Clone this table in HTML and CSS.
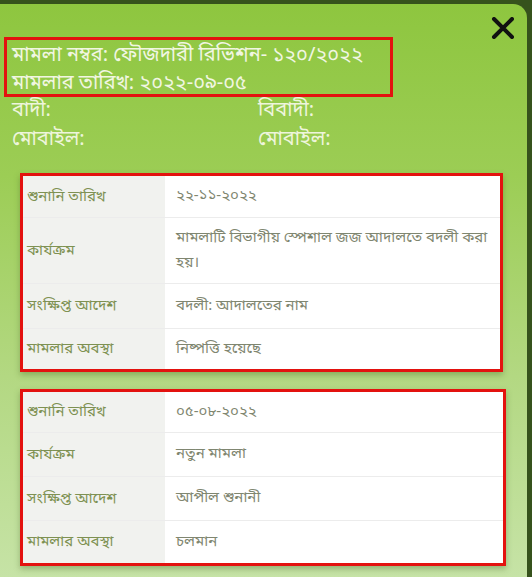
FILE: index.html
```html
<!DOCTYPE html>
<html lang="bn">
<head>
<meta charset="utf-8">
<link rel="stylesheet" href="styles.css">
</head>
<body>
<div class="modal">
  <div class="close-row">
    <svg class="close" width="24" height="22" viewBox="0 0 24 22" aria-label="close">
      <path d="M3 2 L21 20 M21 2 L3 20" stroke="#111" stroke-width="4" stroke-linecap="round" fill="none"/>
    </svg>
  </div>
  <div class="case-box">
    <div class="line">মামলা নম্বর: ফৌজদারী রিভিশন- ১২০/২০২২</div>
    <div class="line">মামলার তারিখ: ২০২২-০৯-০৫</div>
  </div>
  <div class="parties">
    <div>বাদী:</div><div>বিবাদী:</div>
    <div>মোবাইল:</div><div>মোবাইল:</div>
  </div>
  <div class="card card-one">
    <div class="row r41"><div class="lbl">শুনানি তারিখ</div><div class="val">২২-১১-২০২২</div></div>
    <div class="row r65"><div class="lbl">কার্যক্রম</div><div class="val">মামলাটি বিভাগীয় স্পেশাল জজ আদালতে বদলী করা হয়।</div></div>
    <div class="row r44"><div class="lbl">সংক্ষিপ্ত আদেশ</div><div class="val">বদলী: আদালতের নাম</div></div>
    <div class="row r40 last"><div class="lbl">মামলার অবস্থা</div><div class="val">নিষ্পত্তি হয়েছে</div></div>
  </div>
  <div class="card card-two">
    <div class="row r40"><div class="lbl">শুনানি তারিখ</div><div class="val">০৫-০৮-২০২২</div></div>
    <div class="row r43"><div class="lbl">কার্যক্রম</div><div class="val">নতুন মামলা</div></div>
    <div class="row r43"><div class="lbl">সংক্ষিপ্ত আদেশ</div><div class="val">আপীল শুনানী</div></div>
    <div class="row r42 last"><div class="lbl">মামলার অবস্থা</div><div class="val">চলমান</div></div>
  </div>
</div>
</body>
</html>
```
FILE: styles.css
```css
html, body {
  margin: 0;
  padding: 0;
}
body {
  width: 532px;
  height: 577px;
  overflow: hidden;
  background: #36521c;
  font-family: "Noto Sans Bengali", "Lohit Bengali", "Noto Sans", "FreeSans", sans-serif;
}
.modal {
  margin-top: 4px;
  width: 527px;
  height: 573px;
  box-sizing: border-box;
  padding-left: 4px;
  border-top-right-radius: 14px;
  background: linear-gradient(180deg, #8ec63f 0%, #9ccd55 30%, #b3d882 65%, #c6e3a6 100%);
  overflow: hidden;
}
.close-row {
  height: 33px;
  display: flex;
  justify-content: flex-end;
  padding-right: 12px;
}
.close {
  display: block;
  margin-top: 13px;
}
.case-box {
  width: 389px;
  height: 60px;
  box-sizing: border-box;
  border: 3px solid #e3120f;
  padding: 2px 0 0 5px;
  color: #f1f6e2;
  font-size: 20px;
  line-height: 28px;
  white-space: nowrap;
}
.parties {
  display: grid;
  grid-template-columns: 246px 1fr;
  padding-left: 8px;
  color: #eef5dc;
  font-size: 20px;
  line-height: 29px;
  margin-bottom: 18px;
}
.card {
  margin-left: 16px;
  border: 3px solid #e3120f;
  background: #fff;
  box-shadow: 0 3px 6px rgba(60, 90, 30, 0.35);
  font-size: 15px;
}
.card-one { width: 483px; box-sizing: border-box; }
.card-two { width: 486px; box-sizing: border-box; margin-top: 17px; }
.row {
  display: grid;
  grid-template-columns: 142px 1fr;
  border-bottom: 1px solid #ececec;
}
.row.last { border-bottom: none; }
.lbl {
  background: #f1f2ef;
  padding-left: 4px;
  display: flex;
  align-items: center;
  color: #7e9152;
}
.val {
  padding: 0 8px 0 11px;
  display: flex;
  align-items: center;
  line-height: 25px;
  color: #7f8670;
}
.r40 { height: 40px; }
.r41 { height: 41px; }
.r42 { height: 42px; }
.r43 { height: 43px; }
.r44 { height: 44px; }
.r65 { height: 65px; }
```
